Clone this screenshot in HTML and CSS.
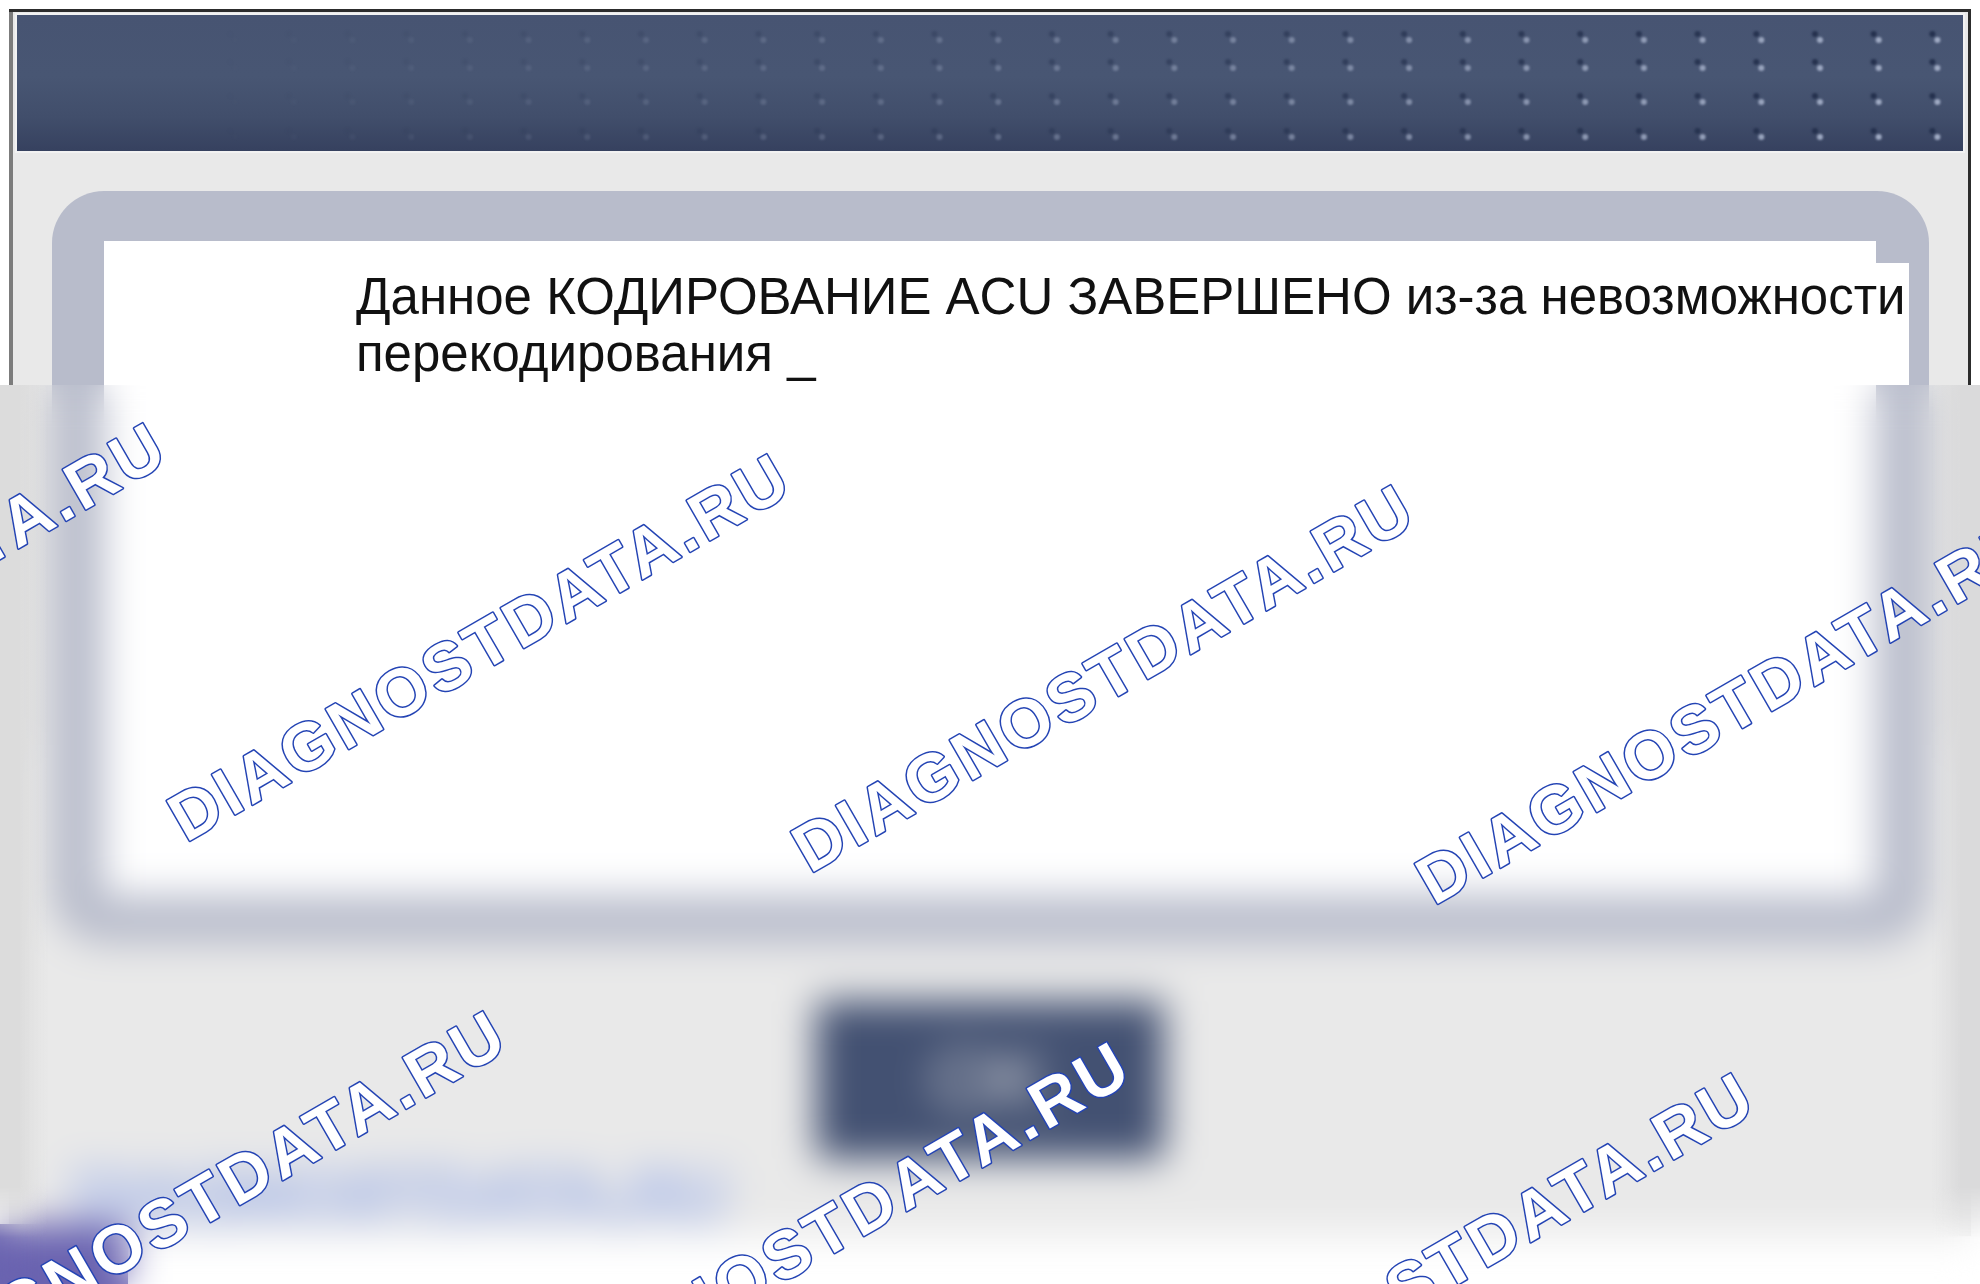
FILE: index.html
```html
<!DOCTYPE html>
<html lang="ru">
<head>
<meta charset="utf-8">
<title>Кодирование ACU</title>
<link rel="stylesheet" href="styles.css">
</head>
<body>
<div class="screen">
  <main class="dialog">
    <header class="titlebar">
      <svg class="dots" viewBox="0 0 1946 136" preserveAspectRatio="none" aria-hidden="true">
        <defs>
          <pattern id="stud" x="13" y="0" width="58.7" height="136" patternUnits="userSpaceOnUse">
            <g fill="#24304d">
              <circle cx="24" cy="19" r="3"/><circle cx="24" cy="47" r="3"/>
              <circle cx="24" cy="81" r="3"/><circle cx="24" cy="116" r="3"/>
            </g>
            <g fill="#a0abc4">
              <circle cx="29" cy="25" r="3"/><circle cx="29" cy="53" r="3"/>
              <circle cx="29" cy="87" r="3"/><circle cx="29" cy="122" r="3"/>
            </g>
          </pattern>
        </defs>
        <rect width="1946" height="136" fill="url(#stud)"/>
      </svg>
    </header>
    <section class="panel">
      <div class="paper">
        <p class="message">Данное КОДИРОВАНИЕ ACU ЗАВЕРШЕНО из-за невозможности<br>перекодирования _</p>
      </div>
    </section>
    <button class="ok" type="button">OK</button>
    <p class="brand">DIAGNOSTDATA.RU</p>
  </main>
  <div class="corner"></div>
  <div class="veil">
    <svg class="marks" width="1980" height="899" aria-hidden="true">
      <g class="mark">
        <text transform="translate(-438 427) rotate(-30)">DIAGNOSTDATA.RU</text>
        <text transform="translate(186 458) rotate(-30)">DIAGNOSTDATA.RU</text>
        <text transform="translate(810 489) rotate(-30)">DIAGNOSTDATA.RU</text>
        <text transform="translate(1434 521) rotate(-30)">DIAGNOSTDATA.RU</text>
        <text transform="translate(-98 1015) rotate(-30)">DIAGNOSTDATA.RU</text>
        <text transform="translate(526 1046) rotate(-30)">DIAGNOSTDATA.RU</text>
        <text transform="translate(1150 1077) rotate(-30)">DIAGNOSTDATA.RU</text>
      </g>
    </svg>
  </div>
</div>
</body>
</html>
```
FILE: styles.css
```css
* {
  box-sizing: border-box;
}

body {
  margin: 0;
  background: #fff;
  font-family: "Liberation Sans", Arial, sans-serif;
}

.screen {
  position: relative;
  display: flow-root;
  height: 100vh;
  overflow: hidden;
}

.dialog {
  margin: 9px 9px 0;
  padding: 6px 8px 5px;
  background:
    linear-gradient(#2c2c2c, #2c2c2c) top / 100% 3px no-repeat,
    linear-gradient(#7c7c7c, #7c7c7c) left top / 4px 60% no-repeat,
    linear-gradient(#2c2c2c, #2c2c2c) right top / 3px 60% no-repeat,
    #e9e9e9;
}

.titlebar {
  height: 136px;
  background: linear-gradient(#475472, #485673 45%, #414e6b 75%, #36415f);
  box-shadow: 0 0 0 2px #f2f2f2;
}

.dots {
  display: block;
  width: 100%;
  height: 100%;
  filter: blur(1px);
  -webkit-mask-image: linear-gradient(90deg, transparent 10%, rgb(0 0 0 / 30%) 45%, #000 95%);
  mask-image: linear-gradient(90deg, transparent 10%, rgb(0 0 0 / 30%) 45%, #000 95%);
}

.panel {
  margin: 40px 34px 0 35px;
  padding: 50px 53px 48px 52px;
  border-radius: 52px;
  background: #b8bccb;
}

.paper {
  height: 654px;
  padding-top: 22px;
  background: #fff;
}

.message {
  margin: 0 -33px 0 0;
  padding: 5px 0 3px 252px;
  background: #fff;
  color: #111;
  font-size: 51px;
  line-height: 57px;
  white-space: nowrap;
}

.ok {
  display: block;
  width: 348px;
  height: 158px;
  margin: 58px auto 0;
  border: 0;
  border-radius: 4px;
  background: #435172;
  color: #dedede;
  font: 80px "Liberation Sans", Arial, sans-serif;
}

.brand {
  margin: 0;
  padding-left: 55px;
  color: #f0f2f8;
  font-size: 68px;
  font-weight: bold;
  line-height: 72px;
  -webkit-text-stroke: 3px #6684d8;
}

.corner {
  width: 128px;
  height: 80px;
  margin-top: -12px;
  background: #6a63b0;
}

.veil {
  position: absolute;
  top: 385px;
  right: 0;
  bottom: 0;
  left: 0;
  overflow: hidden;
  backdrop-filter: blur(19px);
}

.veil::before {
  content: "";
  position: absolute;
  top: 0;
  right: 0;
  left: 0;
  height: 853px;
  background: linear-gradient(90deg, #dcdcdc 20px, transparent 48px, transparent calc(100% - 48px), #dadadb calc(100% - 20px));
  -webkit-mask-image: linear-gradient(#000 94%, transparent);
  mask-image: linear-gradient(#000 94%, transparent);
}

.marks {
  position: relative;
  display: block;
}

.mark {
  fill: #fff;
  stroke: #2444b4;
  stroke-width: 3;
  stroke-linejoin: round;
  paint-order: stroke;
  font-size: 67px;
  font-weight: bold;
  letter-spacing: 4px;
}
```
